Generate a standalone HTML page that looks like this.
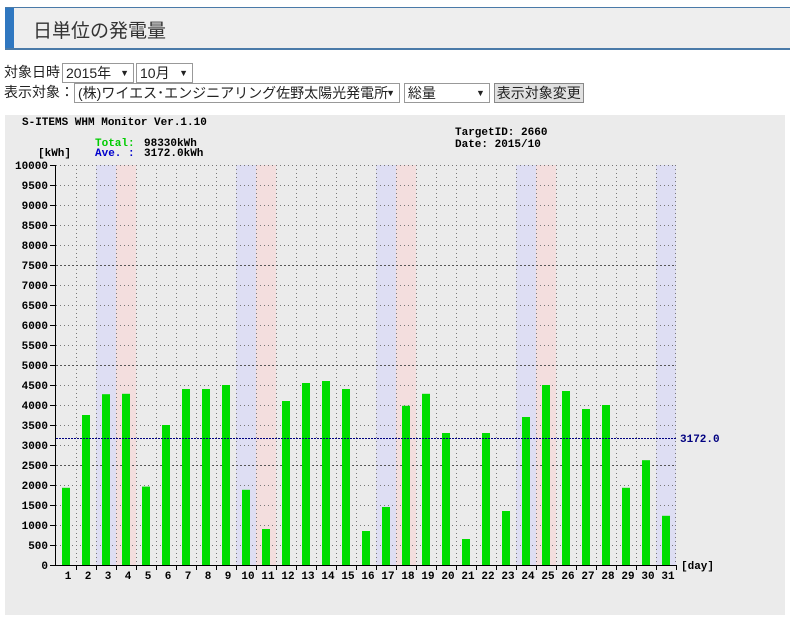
<!DOCTYPE html>
<html><head><meta charset="utf-8"><style>
body{margin:0;background:#fff;font-family:"Liberation Sans","Noto Sans CJK JP",sans-serif;width:790px;height:618px;overflow:hidden;position:relative}
.hd{position:absolute;left:5px;top:7px;width:790px;height:40px;background:#eeeeee;border-top:1px solid #4a7aa8;border-bottom:2px solid #4a7aa8}
.hd .bar{position:absolute;left:0;top:0;width:9px;height:40px;background:#2f77c0}
.hd span{position:absolute;left:28px;top:8px;font-size:19px;color:#333}
.row{position:absolute;left:4px;font-size:14px;color:#222;white-space:nowrap}
.sel{display:inline-block;border:1px solid #999;background:#fff;height:18px;line-height:18px;padding:0 3px;vertical-align:middle;position:relative;font-size:14px}
.sel:after{content:"▼";position:absolute;right:4px;top:0;font-size:9px}
.btn{display:inline-block;border:1px solid #888;background:#e1e1e1;height:18px;line-height:18px;padding:0 2px;vertical-align:middle}
.panel{position:absolute;left:5px;top:115px;width:780px;height:500px;background:#ebebeb}
svg{position:absolute;left:0;top:0}
svg text{font-family:"Liberation Mono",monospace;font-weight:bold;font-size:11px}
</style></head><body>
<div class="hd"><div class="bar"></div><span>日単位の発電量</span></div>
<div class="row" style="top:62px">対象日時<span class="sel" style="width:64px;margin-left:2px">2015年</span><span class="sel" style="width:49px;margin-left:2px">10月</span></div>
<div class="row" style="top:82px">表示対象：<span class="sel" style="width:318px">(株)ワイエス･エンジニアリング佐野太陽光発電所</span> <span class="sel" style="width:78px">総量</span> <span class="btn">表示対象変更</span></div>
<div class="panel"></div>
<svg width="790" height="618">
<g fill="#dedef3"><rect x="96" y="165" width="20" height="400"/><rect x="236" y="165" width="20" height="400"/><rect x="376" y="165" width="20" height="400"/><rect x="516" y="165" width="20" height="400"/><rect x="656" y="165" width="20" height="400"/></g>
<g fill="#f3dede"><rect x="116" y="165" width="20" height="400"/><rect x="256" y="165" width="20" height="400"/><rect x="396" y="165" width="20" height="400"/><rect x="536" y="165" width="20" height="400"/></g>
<path stroke="#777" stroke-width="1" stroke-dasharray="1,3" fill="none" d="M56 165.5H676M56 185.5H676M56 205.5H676M56 225.5H676M56 245.5H676M56 265.5H676M56 285.5H676M56 305.5H676M56 325.5H676M56 345.5H676M56 365.5H676M56 385.5H676M56 405.5H676M56 425.5H676M56 445.5H676M56 465.5H676M56 485.5H676M56 505.5H676M56 525.5H676M56 545.5H676M76.5 165V565M96.5 165V565M116.5 165V565M136.5 165V565M156.5 165V565M176.5 165V565M196.5 165V565M216.5 165V565M236.5 165V565M256.5 165V565M276.5 165V565M296.5 165V565M316.5 165V565M336.5 165V565M356.5 165V565M376.5 165V565M396.5 165V565M416.5 165V565M436.5 165V565M456.5 165V565M476.5 165V565M496.5 165V565M516.5 165V565M536.5 165V565M556.5 165V565M576.5 165V565M596.5 165V565M616.5 165V565M636.5 165V565M656.5 165V565M675.5 165V565"/>
<path stroke="#555" stroke-dasharray="2,2" d="M56 265.5H676M56 365.5H676M56 465.5H676"/>
<g fill="#00dd00">
<rect x="62" y="487.8" width="8" height="77.2"/><rect x="82" y="415" width="8" height="150"/><rect x="102" y="394.2" width="8" height="170.8"/><rect x="122" y="393.8" width="8" height="171.2"/><rect x="142" y="486.6" width="8" height="78.4"/><rect x="162" y="425" width="8" height="140"/><rect x="182" y="389" width="8" height="176"/><rect x="202" y="389" width="8" height="176"/><rect x="222" y="385" width="8" height="180"/><rect x="242" y="489.8" width="8" height="75.2"/><rect x="262" y="529" width="8" height="36"/><rect x="282" y="401" width="8" height="164"/><rect x="302" y="383" width="8" height="182"/><rect x="322" y="381" width="8" height="184"/><rect x="342" y="389" width="8" height="176"/><rect x="362" y="531" width="8" height="34"/><rect x="382" y="507" width="8" height="58"/><rect x="402" y="405.8" width="8" height="159.2"/><rect x="422" y="393.8" width="8" height="171.2"/><rect x="442" y="433" width="8" height="132"/><rect x="462" y="539" width="8" height="26"/><rect x="482" y="433" width="8" height="132"/><rect x="502" y="511" width="8" height="54"/><rect x="522" y="417" width="8" height="148"/><rect x="542" y="385" width="8" height="180"/><rect x="562" y="391" width="8" height="174"/><rect x="582" y="409" width="8" height="156"/><rect x="602" y="405" width="8" height="160"/><rect x="622" y="487.8" width="8" height="77.2"/><rect x="642" y="460.2" width="8" height="104.8"/><rect x="662" y="515.8" width="8" height="49.2"/>
</g>
<path stroke="#000" stroke-width="1" fill="none" d="M55.5 165V565M50 565.5H676M50 165.5H56M50 185.5H56M50 205.5H56M50 225.5H56M50 245.5H56M50 265.5H56M50 285.5H56M50 305.5H56M50 325.5H56M50 345.5H56M50 365.5H56M50 385.5H56M50 405.5H56M50 425.5H56M50 445.5H56M50 465.5H56M50 485.5H56M50 505.5H56M50 525.5H56M50 545.5H56M76.5 565V570M96.5 565V570M116.5 565V570M136.5 565V570M156.5 565V570M176.5 565V570M196.5 565V570M216.5 565V570M236.5 565V570M256.5 565V570M276.5 565V570M296.5 565V570M316.5 565V570M336.5 565V570M356.5 565V570M376.5 565V570M396.5 565V570M416.5 565V570M436.5 565V570M456.5 565V570M476.5 565V570M496.5 565V570M516.5 565V570M536.5 565V570M556.5 565V570M576.5 565V570M596.5 565V570M616.5 565V570M636.5 565V570M656.5 565V570M676.5 565V570"/>
<path stroke="#000080" stroke-dasharray="2,1" d="M56 438.5H676"/>
<g text-anchor="end">
<text x="48" y="169">10000</text><text x="48" y="189">9500</text><text x="48" y="209">9000</text><text x="48" y="229">8500</text><text x="48" y="249">8000</text><text x="48" y="269">7500</text><text x="48" y="289">7000</text><text x="48" y="309">6500</text><text x="48" y="329">6000</text><text x="48" y="349">5500</text><text x="48" y="369">5000</text><text x="48" y="389">4500</text><text x="48" y="409">4000</text><text x="48" y="429">3500</text><text x="48" y="449">3000</text><text x="48" y="469">2500</text><text x="48" y="489">2000</text><text x="48" y="509">1500</text><text x="48" y="529">1000</text><text x="48" y="549">500</text><text x="48" y="569">0</text>
</g>
<g text-anchor="middle">
<text x="68" y="579">1</text><text x="88" y="579">2</text><text x="108" y="579">3</text><text x="128" y="579">4</text><text x="148" y="579">5</text><text x="168" y="579">6</text><text x="188" y="579">7</text><text x="208" y="579">8</text><text x="228" y="579">9</text><text x="248" y="579">10</text><text x="268" y="579">11</text><text x="288" y="579">12</text><text x="308" y="579">13</text><text x="328" y="579">14</text><text x="348" y="579">15</text><text x="368" y="579">16</text><text x="388" y="579">17</text><text x="408" y="579">18</text><text x="428" y="579">19</text><text x="448" y="579">20</text><text x="468" y="579">21</text><text x="488" y="579">22</text><text x="508" y="579">23</text><text x="528" y="579">24</text><text x="548" y="579">25</text><text x="568" y="579">26</text><text x="588" y="579">27</text><text x="608" y="579">28</text><text x="628" y="579">29</text><text x="648" y="579">30</text><text x="668" y="579">31</text>
</g>
<text x="681" y="569">[day]</text>
<text x="680" y="442" fill="#000080">3172.0</text>
<text x="22" y="125">S-ITEMS WHM Monitor Ver.1.10</text>
<text x="95" y="146" fill="#00cc00">Total:</text><text x="144" y="146">98330kWh</text>
<text x="38" y="156">[kWh]</text>
<text x="95" y="156" fill="#0000cc">Ave. :</text><text x="144" y="156">3172.0kWh</text>
<text x="455" y="135">TargetID: 2660</text>
<text x="455" y="147">Date: 2015/10</text>
</svg>
</body></html>
